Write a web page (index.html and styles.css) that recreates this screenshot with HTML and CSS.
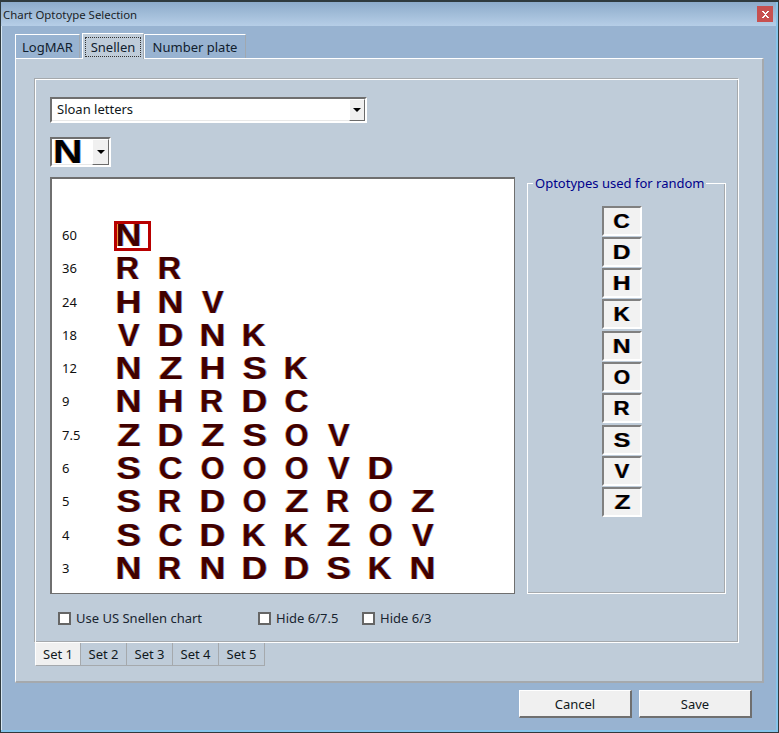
FILE: index.html
```html
<!DOCTYPE html>
<html lang="en">
<head>
<meta charset="utf-8">
<title>Chart Optotype Selection</title>
<link rel="stylesheet" href="styles.css">
</head>
<body>
<div class="window">
  <header class="titlebar">
    <span class="title">Chart Optotype Selection</span>
    <button class="close" aria-label="Close"><svg width="7" height="7" viewBox="0 0 7 7"><path d="M0 0h2v1h1v1h1V1h1V0h2v1H6v1H5v1H4v1h1v1h1v1h1v1H5V6H4V5H3v1H2v1H0V6h1V5h1V4h1V3H2V2H1V1H0z" fill="#fff"/></svg></button>
  </header>
  <main class="client">
    <nav class="top-tabs">
      <span class="ttab t1">LogMAR</span>
      <span class="ttab t2 active"><span class="focus">Snellen</span></span>
      <span class="ttab t3">Number plate</span>
    </nav>
    <section class="outer-panel">
      <div class="inner-panel">
        <div class="combo wide"><span class="combo-text">Sloan letters</span><span class="drop"><i></i></span></div>
        <div class="combo small"><span class="combo-n-wrap"><span class="combo-n">N</span></span><span class="drop"><i></i></span></div>
        <div class="work">
          <div class="chart">
            <div class="row"><span class="lab">60</span><span class="cell"><span class="l n">N</span><i class="selbox"></i></span></div>
            <div class="row"><span class="lab">36</span><span class="l r">R</span><span class="l r">R</span></div>
            <div class="row"><span class="lab">24</span><span class="l h">H</span><span class="l n">N</span><span class="l v">V</span></div>
            <div class="row"><span class="lab">18</span><span class="l v">V</span><span class="l d">D</span><span class="l n">N</span><span class="l k">K</span></div>
            <div class="row"><span class="lab">12</span><span class="l n">N</span><span class="l z">Z</span><span class="l h">H</span><span class="l s">S</span><span class="l k">K</span></div>
            <div class="row"><span class="lab">9</span><span class="l n">N</span><span class="l h">H</span><span class="l r">R</span><span class="l d">D</span><span class="l c">C</span></div>
            <div class="row"><span class="lab">7.5</span><span class="l z">Z</span><span class="l d">D</span><span class="l z">Z</span><span class="l s">S</span><span class="l o">O</span><span class="l v">V</span></div>
            <div class="row"><span class="lab">6</span><span class="l s">S</span><span class="l c">C</span><span class="l o">O</span><span class="l o">O</span><span class="l o">O</span><span class="l v">V</span><span class="l d">D</span></div>
            <div class="row"><span class="lab">5</span><span class="l s">S</span><span class="l r">R</span><span class="l d">D</span><span class="l o">O</span><span class="l z">Z</span><span class="l r">R</span><span class="l o">O</span><span class="l z">Z</span></div>
            <div class="row"><span class="lab">4</span><span class="l s">S</span><span class="l c">C</span><span class="l d">D</span><span class="l k">K</span><span class="l k">K</span><span class="l z">Z</span><span class="l o">O</span><span class="l v">V</span></div>
            <div class="row"><span class="lab">3</span><span class="l n">N</span><span class="l r">R</span><span class="l n">N</span><span class="l d">D</span><span class="l d">D</span><span class="l s">S</span><span class="l k">K</span><span class="l n">N</span></div>
          </div>
          <fieldset class="group">
            <legend>Optotypes used for random</legend>
            <div class="opts">
              <span class="opt"><b class="c">C</b></span><span class="opt"><b class="d">D</b></span><span class="opt"><b class="h">H</b></span><span class="opt"><b class="k">K</b></span><span class="opt"><b class="n">N</b></span><span class="opt"><b class="o">O</b></span><span class="opt"><b class="r">R</b></span><span class="opt"><b class="s">S</b></span><span class="opt"><b class="v">V</b></span><span class="opt"><b class="z">Z</b></span>
            </div>
          </fieldset>
        </div>
        <div class="checks">
          <label class="check c1"><i></i>Use US Snellen chart</label>
          <label class="check c2"><i></i>Hide 6/7.5</label>
          <label class="check"><i></i>Hide 6/3</label>
        </div>
      </div>
      <nav class="set-tabs">
        <span class="stab on">Set 1</span><span class="stab">Set 2</span><span class="stab">Set 3</span><span class="stab">Set 4</span><span class="stab">Set 5</span>
      </nav>
    </section>
    <footer class="actions">
      <button class="btn">Cancel</button>
      <button class="btn">Save</button>
    </footer>
  </main>
</div>
</body>
</html>
```
FILE: styles.css
```css
* { box-sizing: border-box; }
html, body { margin: 0; padding: 0; }
body { width: 779px; height: 733px; overflow: hidden; font-family: "Noto Sans", sans-serif; font-size: 13px; color: #101820; }
.window { width: 779px; height: 733px; display: flex; flex-direction: column; border: 1px solid #2f3a3e; border-top-width: 2px; background: #98b3d1; box-shadow: inset -2px 0 0 #86c4ea, inset 0 -2px 0 #86c4ea, inset 1px 0 0 #d8e8f4; }
.titlebar { height: 24px; margin-right: 2px; flex: none; display: flex; align-items: center; justify-content: space-between; padding: 0 3px 0 2px; background: linear-gradient(#8dabca, #b6cee7); }
.title { font-size: 11.4px; color: #1a1f28; margin-top: 1px; }
.close { width: 16px; height: 16px; border: 0; padding: 0; display: flex; align-items: center; justify-content: center; background: #c75050; }
.client { flex: 1; display: flex; flex-direction: column; padding: 7px 14px 0 14px; }
.top-tabs { display: flex; height: 25px; align-items: flex-end; position: relative; z-index: 1; }
.ttab { height: 24px; display: flex; align-items: center; justify-content: center; border: 1px solid #fff; border-bottom: 0; border-right: 1px solid #a0a8b0; background: #98b3d1; color: #10202e; }
.t1 { width: 65px; margin-right: 2px; }
.t2 { width: 62px; background: #bfccd9; margin-bottom: -1px; height: 26px; }
.t3 { width: 102px; }
.focus { display: block; width: 56px; height: 20px; line-height: 18px; text-align: center; border: 1px dotted #333; }
.outer-panel { width: 749px; height: 625px; flex: none; background: #bfccd9; border: 1px solid #fff; border-right: 2px solid #a5a9ad; border-bottom: 2px solid #a5a9ad; padding: 19px 0 0 18px; }
.inner-panel { width: 705px; height: 565px; border: 1px solid; border-color: #a5a9ad #fff #fff #a5a9ad; padding: 18px 0 0 15px; box-shadow: inset 1px 1px 0 #fff, inset -1px -1px 0 #a5a9ad; }
.combo { display: flex; background: #fff; border: 2px solid #6f6f6f; border-right-color: #fff; border-bottom-color: #fff; box-shadow: inset -1px -1px 0 #e8e8e8; }
.wide { width: 317px; height: 26px; align-items: center; justify-content: space-between; padding-left: 5px; }
.small { width: 61px; height: 30px; margin-top: 14px; align-items: center; justify-content: space-between; padding-left: 3px; }
.combo-text { font-size: 13px; color: #101820; line-height: 20px; margin-top: -2px; }
.combo-n-wrap { width: 38px; display: block; }
.combo-n { display: inline-block; margin-top: 2px; font: bold 33px/26px "Liberation Sans", sans-serif; color: #000; transform: translateX(-2px) scaleX(1.24); transform-origin: left center; text-shadow: -0.6px 0 rgba(220,120,30,.7), 0.6px 0 rgba(70,130,230,.7); }
.drop { width: 16px; height: 22px; background: #f0f0f0; border: 1px solid #fff; border-right-color: #6b6b6b; border-bottom-color: #6b6b6b; display: flex; align-items: center; justify-content: center; }
.small .drop { width: 17px; height: 26px; }
.drop i { width: 0; height: 0; border: 4px solid transparent; border-top: 4px solid #000; border-bottom: 0; }
.work { display: flex; gap: 12px; margin-top: 10px; align-items: flex-start; }
.chart { width: 465px; height: 417px; flex: none; background: #fff; border: 2px solid #6f6f6f; border-right-width: 1px; border-bottom-width: 1px; padding: 39.7px 0 0 10px; }
.row { display: flex; align-items: center; height: 33.33px; }
.lab { width: 56px; font-size: 13px; color: #101010; flex: none; margin-top: -1px; }
.c { --sx: 1.09; --dx: -1.6px; }
.d { --sx: 1.17; --dx: -2.5px; }
.h { --sx: 1.18; --dx: -2.5px; }
.k { --sx: 1.08; --dx: -2.2px; }
.n { --sx: 1.18; --dx: -2.5px; }
.o { --sx: 1; --dx: -1.2px; }
.r { --sx: 1.06; --dx: -2.2px; }
.s { --sx: 1.2; --dx: -1.4px; }
.v { --sx: 1.06; --dx: 0px; }
.z { --sx: 1.25; --dx: -0.8px; }
.l { width: 42px; flex: none; font: bold 30.5px/33px "Liberation Sans", sans-serif; color: #400000; text-shadow: -0.7px 0 rgba(220,120,30,.7), 0.7px 0 rgba(70,130,230,.7); transform: translateX(var(--dx)) scaleX(var(--sx)); transform-origin: left center; }
.cell { width: 42px; flex: none; position: relative; display: block; }
.cell .l { display: block; }
.selbox { position: absolute; left: -4px; top: 2px; width: 37px; height: 30px; border: 3px solid #b80000; }
.group { width: 199px; height: 417px; flex: none; margin: 0; padding: 0; border: 1px solid #fff; box-shadow: inset -1px -1px 0 #a5a9ad; }
.group legend { margin-left: 5px; padding: 0 2px; color: #00008b; font-size: 13px; line-height: 12px; }
.opts { display: flex; flex-direction: column; align-items: center; padding: 16.5px 9px 0 0; }
.opt { width: 40px; height: 30px; flex: none; margin-bottom: 1.33px; background: #f2f2f2; border: 2px solid #808080; border-right-color: #fff; border-bottom-color: #fff; display: flex; align-items: center; justify-content: center; }
.opt b { display: inline-block; font: bold 21px/26px "Liberation Sans", sans-serif; color: #000; transform: scaleX(var(--sx)); text-shadow: -0.5px 0 rgba(220,120,30,.7), 0.5px 0 rgba(70,130,230,.7); }
.checks { display: flex; margin: 17px 0 0 8px; height: 14px; align-items: center; }
.check { display: flex; align-items: center; gap: 5px; color: #182430; }
.check i { width: 13px; height: 13px; background: #fff; border: 2px solid #666; }
.c1 { width: 200px; }
.c2 { width: 104px; }
.set-tabs { display: flex; height: 23px; margin-left: 1px; }
.stab { width: 46px; display: flex; align-items: center; justify-content: center; padding-bottom: 1px; background: #bfccd9; border-right: 1px solid #a5a9ad; border-bottom: 1px solid #a5a9ad; color: #101820; }
.stab.on { background: #f0f0f0; border-left: 1px solid #fff; }
.actions { display: flex; gap: 7px; justify-content: flex-end; padding: 7px 12px 0 0; }
.btn { width: 113px; height: 28px; background: #f0f0f0; border: 1px solid #fff; border-right: 2px solid #6f6f6f; border-bottom: 2px solid #6f6f6f; font: 13px "Noto Sans", sans-serif; color: #101820; padding: 0; }
```
